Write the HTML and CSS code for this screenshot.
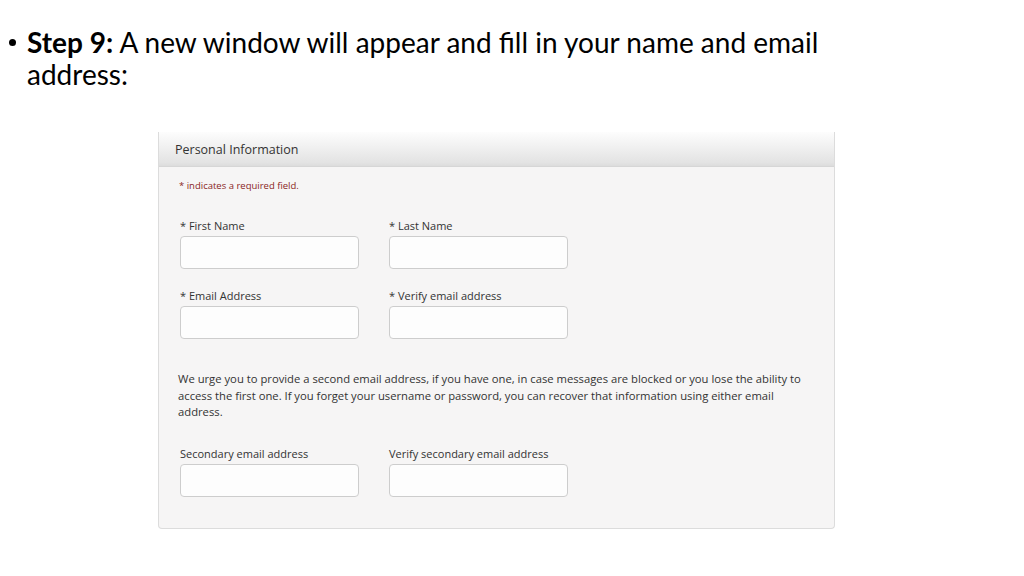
FILE: index.html
```html
<!DOCTYPE html>
<html>
<head>
<meta charset="utf-8">
<link rel="stylesheet" href="styles.css">
</head>
<body>
<div class="slide">
  <ul class="bullets">
    <li><b>Step 9:</b> A new window will appear and fill in your name and email address:</li>
  </ul>
  <div class="panel">
    <div class="panel-head">Personal Information</div>
    <div class="panel-body">
      <p class="req">* indicates a required field.</p>
      <div class="row">
        <div class="field"><label>* First Name</label><div class="input"></div></div>
        <div class="field"><label>* Last Name</label><div class="input"></div></div>
      </div>
      <div class="row">
        <div class="field"><label>* Email Address</label><div class="input"></div></div>
        <div class="field"><label>* Verify email address</label><div class="input"></div></div>
      </div>
      <p class="note">We urge you to provide a second email address, if you have one, in case messages are blocked or you lose the ability to access the first one. If you forget your username or password, you can recover that information using either email address.</p>
      <div class="row last">
        <div class="field"><label>Secondary email address</label><div class="input"></div></div>
        <div class="field"><label>Verify secondary email address</label><div class="input"></div></div>
      </div>
    </div>
  </div>
</div>
</body>
</html>
```
FILE: styles.css
```css
html, body {
  margin: 0;
  padding: 0;
  background: #ffffff;
}
.slide {
  width: 1024px;
  height: 576px;
  position: relative;
  overflow: hidden;
}
.bullets {
  margin: 0;
  padding: 26px 0 0 27px;
  list-style: none;
  font-family: Lato, "Open Sans", sans-serif;
  font-size: 28px;
  line-height: 32px;
  color: #000;
  width: 820px;
}
.bullets li {
  position: relative;
}
.bullets li::before {
  content: "";
  position: absolute;
  left: -18px;
  top: 13px;
  width: 7px;
  height: 7px;
  border-radius: 50%;
  background: #000;
}
.bullets b {
  font-weight: 700;
}
.panel {
  margin: 42px 0 0 158px;
  width: 675px;
  border: 1px solid #dcdcdc;
  border-top: none;
  border-radius: 0 0 4px 4px;
  background: #f6f5f5;
  font-family: "Open Sans", sans-serif;
  color: #333;
}
.panel-head {
  height: 35px;
  box-sizing: border-box;
  padding: 9px 0 0 16px;
  font-size: 12.5px;
  color: #333;
  background: linear-gradient(#fdfdfd, #e3e3e3 90%, #dcdcdc);
  border-bottom: 1px solid #d6d6d6;
}
.panel-body {
  padding: 12px 0 31px 21px;
}
.req {
  margin: 0 0 26px -1px;
  font-size: 9.5px;
  color: #8a1f1f;
}
.row {
  display: flex;
  gap: 30px;
  margin-bottom: 19px;
}
.row.last {
  margin-bottom: 0;
}
.field {
  display: flex;
  flex-direction: column;
  width: 179px;
}
.field label {
  font-size: 11px;
  line-height: 15px;
  margin-bottom: 3px;
}
.input {
  height: 33px;
  box-sizing: border-box;
  border: 1px solid #cdcdcd;
  border-radius: 4px;
  background: #fdfdfd;
}
.note {
  margin: 32px 30px 25px -2px;
  font-size: 11.25px;
  line-height: 16.5px;
  color: #333;
}
```
